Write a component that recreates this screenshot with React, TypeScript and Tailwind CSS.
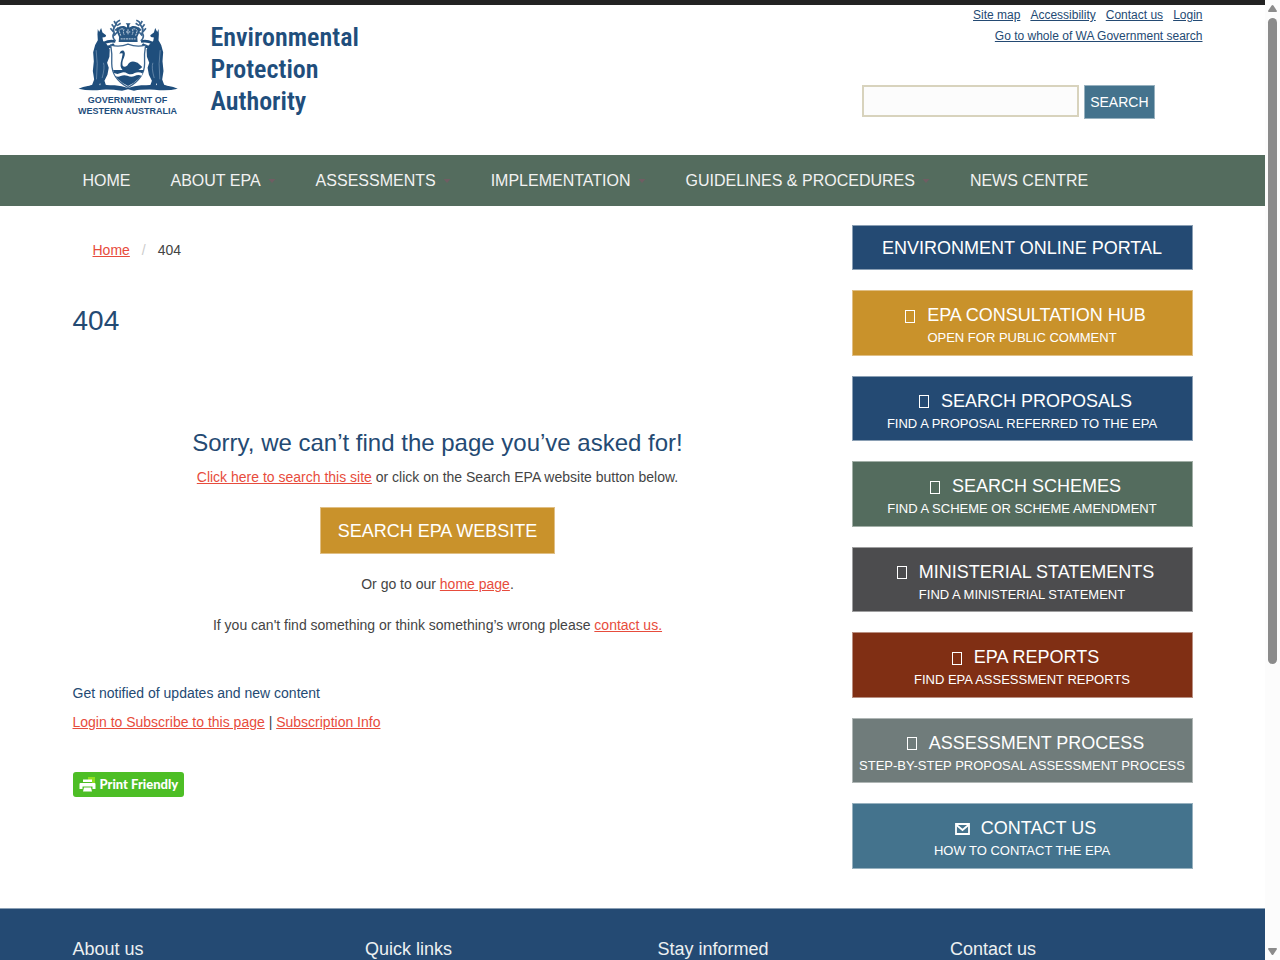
import React from "react";

const navItems = [
  { label: "HOME", menu: false },
  { label: "ABOUT EPA", menu: true },
  { label: "ASSESSMENTS", menu: true },
  { label: "IMPLEMENTATION", menu: true },
  { label: "GUIDELINES & PROCEDURES", menu: true },
  { label: "NEWS CENTRE", menu: false },
];

const tiles = [
  { title: "EPA CONSULTATION HUB", sub: "OPEN FOR PUBLIC COMMENT", tone: "bg-[#c9922b] border-[#e0bf85]" },
  { title: "SEARCH PROPOSALS", sub: "FIND A PROPOSAL REFERRED TO THE EPA", tone: "bg-[#244a73] border-[#8a9fb4]" },
  { title: "SEARCH SCHEMES", sub: "FIND A SCHEME OR SCHEME AMENDMENT", tone: "bg-[#546c5e] border-[#a2afa7]" },
  { title: "MINISTERIAL STATEMENTS", sub: "FIND A MINISTERIAL STATEMENT", tone: "bg-[#4c4c4e] border-[#9e9e9f]" },
  { title: "EPA REPORTS", sub: "FIND EPA ASSESSMENT REPORTS", tone: "bg-[#802f14] border-[#b98f81]" },
  { title: "ASSESSMENT PROCESS", sub: "STEP-BY-STEP PROPOSAL ASSESSMENT PROCESS", tone: "bg-[#707c7b] border-[#afb6b5]" },
  { title: "CONTACT US", sub: "HOW TO CONTACT THE EPA", tone: "bg-[#44738d] border-[#97b1bf]", mail: true },
];

function Supporter() {
  return (
    <g>
      <path
        d="M109 88 L113 97 L119 85 L123 99 L134 107 L132 112 L123 114 L125 124 L136 134 L145 150 L144 172 L137 190 L142 205 L138 226 L129 244 L133 256 L146 260 L146 267 L118 267 L116 250 L112 262 L104 268 L64 268 L92 256 L98 240 L94 215 L97 185 L95 158 L101 136 L109 122 L108 104 Z"
        fill="#1f4e7c"
      />
      <path d="M128 130 Q144 122 162 126 M132 142 Q146 144 158 134" fill="none" stroke="#1f4e7c" strokeWidth="8" />
      <path d="M104 152 Q110 190 105 240 M126 190 Q131 204 122 236" fill="none" stroke="#7f9cb9" strokeWidth="2" />
      <path d="M162 124 Q150 112 158 100 M160 104 Q151 86 164 76 Q164 66 176 62" fill="none" stroke="#3a648e" strokeWidth="5" />
      <path d="M157 98 L147 86 M160 86 L151 74 M165 76 L158 64 M158 108 L167 98 M161 92 L171 84 M167 78 L178 71" stroke="#3a648e" strokeWidth="5" />
    </g>
  );
}

function CoatOfArms() {
  return (
    <svg viewBox="50 55 300 220" className="block h-[73px] w-[100px]" aria-hidden="true">
      <path
        d="M51 268 Q86 254 126 258 L160 258 Q182 260 200 266 Q218 260 240 258 L274 258 Q316 254 350 268 Q318 276 280 271 Q240 270 218 274 L200 270 L182 274 Q150 270 122 271 Q82 276 51 268 Z"
        fill="#1f4e7c"
      />
      <Supporter />
      <g transform="translate(401 0) scale(-1 1)">
        <Supporter />
      </g>
      <path
        d="M173 112 L164 92 Q171 77 188 79 L197 84 L197 76 L193 71 L208 71 L204 76 L204 84 L213 79 Q230 77 237 92 L228 112 L229 127 L172 127 Z"
        fill="#285682"
      />
      <path
        d="M178 108 L173 93 Q178 85 188 89 Q184 98 189 106 M223 108 L228 93 Q223 85 213 89 Q217 98 212 106 M200 89 L200 106 M194 97 L207 97 M178 118 L223 118"
        fill="none"
        stroke="#c6d3e0"
        strokeWidth="3"
        strokeDasharray="6 2"
      />
      <path d="M148 137 Q175 144 200 134 Q226 144 253 137 Q248 165 250 192 Q250 238 200 264 Q151 238 151 192 Q153 165 148 137 Z" fill="#fff" stroke="#3b658f" strokeWidth="4" />
      <path d="M155 212 L247 212 Q239 242 200 260 Q162 242 155 212 Z" fill="#1f4e7c" />
      <path
        d="M174 163 Q178 151 186 153 Q194 159 188 174 Q181 188 184 199 Q189 206 198 198 Q205 184 220 187 L229 190 L243 203 Q232 215 214 217 L190 216 Q175 209 178 190 Q182 175 184 162 Q178 160 174 163 Z"
        fill="#1f4e7c"
      />
      <path d="M158 221 Q168 226 178 221 Q188 216 198 222 Q210 228 220 221 Q232 216 244 222 L241 229 Q230 224 220 230 Q210 235 198 229 Q188 225 178 230 Q168 234 162 229 Z" fill="#fff" />
    </svg>
  );
}

function Arrow({ down = false }: { down?: boolean }) {
  return (
    <svg viewBox="0 0 9 7" className="h-[7px] w-[9px]" aria-hidden="true">
      <path d={down ? "M0 1 Q0 0 1 0 H8 Q9 0 9 1 L5.4 6.4 Q4.5 7.4 3.6 6.4 Z" : "M0 6 Q0 7 1 7 H8 Q9 7 9 6 L5.4 0.6 Q4.5 -0.4 3.6 0.6 Z"} fill="#8b8b8b" />
    </svg>
  );
}

function RedLink({ children }: { children: React.ReactNode }) {
  return (
    <a href="#" className="text-[#e74c3c] underline">
      {children}
    </a>
  );
}

export default function App() {
  return (
    <div className="flex h-screen bg-white font-['Liberation_Sans',Arial,sans-serif] text-sm leading-5 text-[#444]">
      <div className="min-w-0 flex-1 overflow-hidden">
        <header className="border-t-[5px] border-[#222]">
          <div className="mx-auto flex min-h-[150px] max-w-[1140px] justify-between">
            <a href="#" className="flex pl-[14px] text-[#1f4e7c]">
              <div className="flex w-[102px] flex-col items-center pt-[13px]">
                <CoatOfArms />
                <span className="pt-[4px] text-center text-[9px] leading-[11px] font-bold whitespace-nowrap">
                  GOVERNMENT OF
                  <br />
                  WESTERN AUSTRALIA
                </span>
              </div>
              <span className="pt-[16px] pl-[32px] font-['Roboto_Condensed','Liberation_Sans',sans-serif] text-[26px] leading-8 font-semibold">
                Environmental
                <br />
                Protection
                <br />
                Authority
              </span>
            </a>
            <div className="flex flex-col items-end text-xs leading-[21px] text-[#244a73]">
              <nav aria-label="Utility" className="flex gap-[10px]">
                <a href="#" className="underline">Site map</a>
                <a href="#" className="underline">Accessibility</a>
                <a href="#" className="underline">Contact us</a>
                <a href="#" className="underline">Login</a>
              </nav>
              <a href="#" className="underline">Go to whole of WA Government search</a>
              <form className="mt-[38px] mr-12 flex items-start gap-[5px]" onSubmit={(e) => e.preventDefault()}>
                <input type="text" aria-label="Search" className="h-8 w-[217px] border-2 border-[#d8d3bd] bg-[#fcfcfc] px-2 text-sm" />
                <button type="submit" className="h-[34px] border border-[#97b1bf] bg-[#44738d] px-[5px] text-sm text-white">
                  SEARCH
                </button>
              </form>
            </div>
          </div>
        </header>

        <nav aria-label="Main" className="bg-[#546c5e]">
          <ul className="mx-auto flex max-w-[1140px] text-base leading-[51px] text-[#f2f2f2]">
            {navItems.map((item) => (
              <li key={item.label}>
                <a href="#" className="flex items-center px-5 whitespace-nowrap">
                  {item.label}
                  {item.menu && (
                    <svg viewBox="0 0 8 4" className="ml-[7px] h-1 w-2 shrink-0" aria-hidden="true">
                      <path d="M0.5 0 H7.5 L4 4 Z" fill="#705d63" />
                    </svg>
                  )}
                </a>
              </li>
            ))}
          </ul>
        </nav>

        <div className="mx-auto flex max-w-[1140px] gap-[49px] px-[10px] pb-[39px]">
          <main className="min-w-0 flex-1 pt-[34px]">
            <nav aria-label="Breadcrumb" className="flex pl-5">
              <RedLink>Home</RedLink>
              <span className="px-3 text-[#ccc]">/</span>
              <span>404</span>
            </nav>
            <h1 className="mt-[41px] text-[28px] leading-10 text-[#244a73]">404</h1>
            <div className="mt-[87px] text-center">
              <h2 className="text-2xl leading-[30px] text-[#244a73]">Sorry, we can’t find the page you’ve asked for!</h2>
              <p className="mt-[9px]">
                <RedLink>Click here to search this site</RedLink> or click on the Search EPA website button below.
              </p>
              <a href="#" className="mt-5 inline-block border border-[#e0bf85] bg-[#c9922b] px-[17px] pt-[2px] text-lg leading-[43px] text-white">
                SEARCH EPA WEBSITE
              </a>
              <p className="mt-5">
                Or go to our <RedLink>home page</RedLink>.
              </p>
              <p className="mt-[21px]">
                If you can't find something or think something’s wrong please <RedLink>contact us.</RedLink>
              </p>
            </div>
            <p className="mt-12 text-[#244a73]">Get notified of updates and new content</p>
            <p className="mt-[9px]">
              <RedLink>Login to Subscribe to this page</RedLink> | <RedLink>Subscription Info</RedLink>
            </p>
            <button type="button" className="mt-10 flex h-[25px] items-center gap-[4px] rounded-[3px] bg-[#4dbe25] px-[6px] pb-[2px] font-['Lato',sans-serif] text-[13px] font-black text-white">
              <svg viewBox="0 0 17 17" className="mt-px h-[17px] w-[17px]" aria-hidden="true">
                <path d="M9 1 H16 V7 H13 V4 H9 Z" fill="#8fe01f" />
                <path d="M4 3.5 H13 V6 H4 Z M1.5 7 H15.5 Q16.5 7 16.5 8 V13 H13.5 V10.5 H3.5 V13 H0.5 V8 Q0.5 7 1.5 7 Z M5 11.5 H12 L13 15.5 H4 Z" fill="#fff" />
              </svg>
              Print Friendly
            </button>
          </main>

          <aside className="w-[341px] shrink-0 pt-[19px] text-center text-white">
            <a href="#" className="block border border-[#8a9fb4] bg-[#244a73] pt-[2px] text-lg leading-[41px]">
              ENVIRONMENT ONLINE PORTAL
            </a>
            <div className="mt-5 grid min-h-[579px] auto-rows-fr gap-5">
              {tiles.map((tile) => (
                <a key={tile.title} href="#" className={`flex flex-col items-center border pt-3 ${tile.tone}`}>
                  <span className="flex items-center gap-3 pl-[7px] text-lg leading-6">
                    {tile.mail ? (
                      <svg viewBox="0 0 15 12" className="mt-[2px] -mr-px h-3 w-[15px]" aria-hidden="true">
                        <path d="M1 1 H14 V11 H1 Z" fill="none" stroke="#fff" strokeWidth="1.8" />
                        <path d="M1.5 2 L7.5 7 L13.5 2" fill="none" stroke="#fff" strokeWidth="1.8" />
                      </svg>
                    ) : (
                      <span className="mt-[2px] h-[13px] w-[10px] border border-white" aria-hidden="true" />
                    )}
                    {tile.title}
                  </span>
                  <span className="text-[13px] leading-[21px] whitespace-nowrap">{tile.sub}</span>
                </a>
              ))}
            </div>
          </aside>
        </div>

        <footer className="border-t border-[#8a9fb4] bg-[#244a73] pb-10">
          <div className="mx-auto grid max-w-[1140px] grid-cols-4 gap-[50px] px-[10px] pt-7 text-lg leading-6 text-[#ecf0f1]">
            <h3>About us</h3>
            <h3>Quick links</h3>
            <h3>Stay informed</h3>
            <h3>Contact us</h3>
          </div>
        </footer>
      </div>

      <div className="flex w-[15px] shrink-0 flex-col items-center bg-[#fcfcfc] pt-[5px] pb-[5px]" aria-hidden="true">
        <Arrow />
        <div className="mt-[6px] flex w-[9px] flex-1">
          <div className="h-[69.5%] w-full rounded-full bg-[#8b8b8b]" />
        </div>
        <Arrow down />
      </div>
    </div>
  );
}
